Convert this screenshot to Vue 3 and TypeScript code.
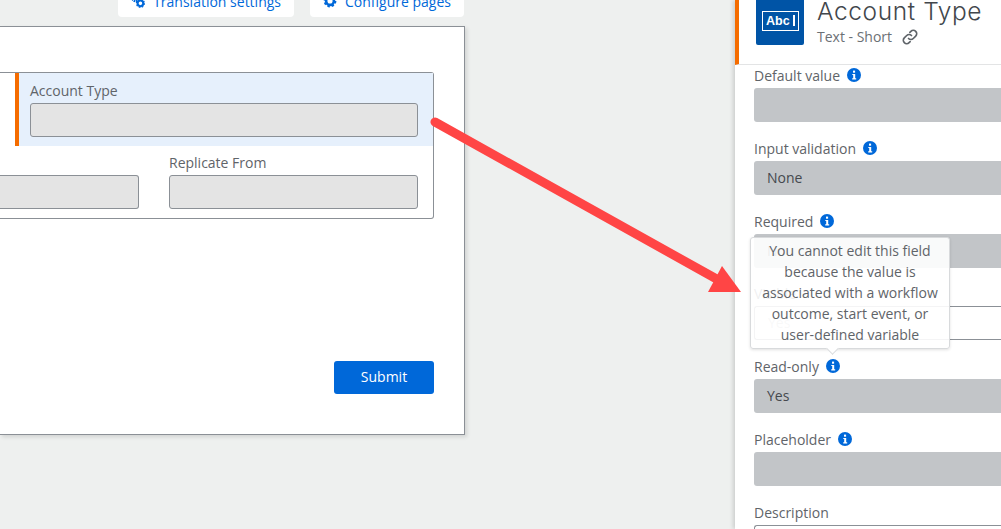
<script setup lang="ts">
interface Field {
  label: string;
  value: string;
  info: boolean;
  plain?: boolean;
}

const fields: Field[] = [
  { label: "Default value", value: "", info: true },
  { label: "Input validation", value: "None", info: true },
  { label: "Required", value: "No", info: true },
  { label: "Visible", value: "Yes", info: false, plain: true },
  { label: "Read-only", value: "Yes", info: true },
  { label: "Placeholder", value: "", info: true },
];
</script>

<template>
  <div class="page">
    <main class="left">
      <div class="toolbar">
        <button class="tool">
          <svg class="gears" viewBox="0 0 18 18" width="18" height="18">
            <circle cx="5.5" cy="5.5" r="3.6" fill="none" stroke="#0068d9" stroke-width="3" stroke-dasharray="2 .8" />
            <circle cx="12" cy="12" r="3.6" fill="none" stroke="#0068d9" stroke-width="2.6" />
            <circle cx="12" cy="12" r="5" fill="none" stroke="#0068d9" stroke-width="1.6" stroke-dasharray="2 1.9" />
          </svg>
          <span>Translation settings</span>
        </button>
        <button class="tool">
          <svg class="gears" viewBox="0 0 18 18" width="16" height="16">
            <circle cx="9" cy="9" r="5" fill="none" stroke="#0068d9" stroke-width="3.4" />
            <circle cx="9" cy="9" r="7" fill="none" stroke="#0068d9" stroke-width="2.4" stroke-dasharray="3 2.5" />
          </svg>
          <span>Configure pages</span>
        </button>
      </div>
      <section class="card">
        <div class="group">
          <div class="selected">
            <label class="form-label">Account Type</label>
            <div class="input"></div>
          </div>
          <div class="row">
            <div class="cell first"><div class="input"></div></div>
            <div class="cell second">
              <label class="form-label">Replicate From</label>
              <div class="input"></div>
            </div>
          </div>
        </div>
        <button class="submit">Submit</button>
      </section>
    </main>

    <aside class="panel">
      <header class="head">
        <div class="abc"><span class="abc-box">Abc<i class="cursor"></i></span></div>
        <div class="head-text">
          <h1>Account Type</h1>
          <div class="sub">
            Text - Short
            <svg viewBox="0 0 24 24" width="18" height="18" fill="none" stroke="#5f6469" stroke-width="2.2" stroke-linecap="round">
              <path d="M10 14a4.5 4.5 0 0 0 6.4 0l3.2-3.2a4.5 4.5 0 0 0-6.4-6.4l-1.4 1.4" />
              <path d="M14 10a4.5 4.5 0 0 0-6.4 0l-3.2 3.2a4.5 4.5 0 0 0 6.4 6.4l1.4-1.4" />
            </svg>
          </div>
        </div>
      </header>
      <div class="fields">
        <div v-for="f in fields" :key="f.label" class="field">
          <div class="label-line">
            <span class="label-text">{{ f.label }}</span>
            <svg v-if="f.info" class="info" viewBox="0 0 14 14" width="14" height="14">
              <circle cx="7" cy="7" r="7" fill="#0068d9" />
              <rect x="6" y="2.6" width="2.1" height="2.1" fill="#fff" />
              <path d="M5.3 5.9h2.9v4.3h1v1.2H5.2v-1.2h1V7.1h-.9z" fill="#fff" />
            </svg>
          </div>
          <div class="value" :class="{ plain: f.plain }">{{ f.value }}</div>
        </div>
        <div class="field">
          <div class="label-line"><span class="label-text">Description</span></div>
          <div class="value plain"></div>
        </div>
      </div>
    </aside>

    <svg class="arrow" viewBox="0 0 1001 529" width="1001" height="529">
      <path d="M435 122 L722 282" stroke="#ff4545" stroke-width="9" stroke-linecap="round" />
      <path d="M722 266 L708 292 L741 292 Z" fill="#ff4545" />
    </svg>

    <div class="tip">
      You cannot edit this field because the value is associated with a workflow outcome, start event, or user-defined variable
    </div>
  </div>
</template>

<style>
html,
body {
  margin: 0;
  overflow: hidden;
}
</style>

<style scoped>
.page {
  position: relative;
  display: flex;
  width: 1001px;
  height: 529px;
  overflow: hidden;
  background: #eef0ef;
  font-family: "Open Sans", "Noto Sans", sans-serif;
  font-size: 14px;
  color: #5f6469;
}
.left {
  width: 735px;
  flex: none;
}
.toolbar {
  display: flex;
  justify-content: flex-end;
  gap: 16px;
  width: 464px;
  height: 17px;
  align-items: flex-end;
}
.tool {
  display: flex;
  align-items: center;
  gap: 8px;
  height: 32px;
  flex: none;
  padding: 0 13px;
  border: 0;
  border-radius: 4px;
  background: #fff;
  color: #0068d9;
  font: inherit;
  white-space: nowrap;
}
.tool:first-child {
  width: 176px;
}
.tool:last-child {
  width: 154px;
}
.card {
  display: flex;
  flex-direction: column;
  box-sizing: border-box;
  width: 465px;
  height: 409px;
  margin-top: 9px;
  padding: 45px 30px 0 0;
  border: 1px solid #8b9096;
  border-left: 0;
  background: #fff;
  box-shadow: 2px 2px 4px rgba(0, 0, 0, 0.12);
}
.group {
  box-sizing: border-box;
  height: 147px;
  border: 1px solid #8b9096;
  border-left: 0;
  border-radius: 0 3px 3px 0;
}
.selected {
  box-sizing: border-box;
  height: 73px;
  margin-left: 15px;
  padding: 9px 15px 0 11px;
  border-left: 4px solid #f56c00;
  background: #e6f0fc;
}
.form-label {
  display: block;
  height: 21px;
  line-height: 17px;
}
.input {
  box-sizing: border-box;
  height: 34px;
  border: 1px solid #8b9096;
  border-radius: 3px;
  background: #e4e4e4;
}
.row {
  display: flex;
  gap: 30px;
  padding: 8px 15px 0 0;
}
.cell.first {
  width: 139px;
  padding-top: 21px;
}
.cell.first .input {
  border-left: 0;
  border-radius: 0 3px 3px 0;
}
.cell.second {
  flex: 1;
}
.submit {
  align-self: flex-end;
  width: 100px;
  height: 33px;
  margin-top: 142px;
  padding: 0 0 2px;
  border: 0;
  border-radius: 3px;
  background: #0068d9;
  color: #fff;
  font: inherit;
}
.panel {
  flex: 1;
  background: #fff;
  box-shadow: -2px 0 4px rgba(0, 0, 0, 0.14);
}
.head {
  display: flex;
  gap: 13px;
  box-sizing: border-box;
  height: 65px;
  padding-left: 17px;
  border-left: 4px solid #f56c00;
  border-bottom: 1px solid #e3e4e5;
}
.abc {
  display: flex;
  align-items: center;
  justify-content: center;
  width: 48px;
  height: 45px;
  background: #0054a6;
  border-radius: 0 0 2px 2px;
}
.abc-box {
  display: flex;
  align-items: center;
  box-sizing: border-box;
  width: 37px;
  height: 20px;
  margin-top: -4px;
  padding-left: 3.5px;
  border: 1.5px solid #fff;
  color: #fff;
  font-family: "Liberation Sans", sans-serif;
  font-size: 12.5px;
  font-weight: 700;
}
.cursor {
  width: 2px;
  height: 11px;
  margin-left: 3px;
  background: #fff;
}
.head-text h1 {
  margin: -6px 0 0;
  font-family: "Inter", sans-serif;
  font-size: 24.5px;
  letter-spacing: 0.6px;
  line-height: 34px;
  font-weight: 300;
  color: #42474c;
  white-space: nowrap;
}
.sub {
  display: flex;
  align-items: center;
  gap: 9px;
  font-size: 14px;
  line-height: 20px;
  margin-top: -1px;
  color: #6b7075;
}
.fields {
  padding: 0 0 0 19px;
}
.field {
  height: 72.8px;
}
.label-line {
  display: flex;
  align-items: center;
  gap: 7px;
  height: 23px;
  line-height: 20px;
}
.label-text {
  margin-top: -1px;
}
.info {
  margin-top: -3px;
}
.value {
  box-sizing: border-box;
  height: 34px;
  padding-left: 13px;
  border-radius: 3px 0 0 3px;
  background: #c2c5c8;
  line-height: 34px;
  color: #45494e;
}
.value.plain {
  border: 1px solid #8b9096;
  border-right: 0;
  background: #fff;
  line-height: 32px;
  color: #b5b8bb;
}
.arrow {
  position: absolute;
  inset: 0;
  pointer-events: none;
}
.tip {
  position: absolute;
  left: 750px;
  top: 237px;
  box-sizing: border-box;
  width: 200px;
  height: 112px;
  padding: 2px 8px 0;
  border: 1px solid #d8dadc;
  border-radius: 3px;
  background: rgba(255, 255, 255, 0.9);
  box-shadow: 0 1px 3px rgba(0, 0, 0, 0.12);
  text-align: center;
  line-height: 21px;
  color: #5f6469;
}
.tip::after {
  content: "";
  position: absolute;
  left: 77px;
  bottom: -5px;
  width: 8px;
  height: 8px;
  background: #fff;
  border-right: 1px solid #d8dadc;
  border-bottom: 1px solid #d8dadc;
  transform: rotate(45deg);
}
</style>
